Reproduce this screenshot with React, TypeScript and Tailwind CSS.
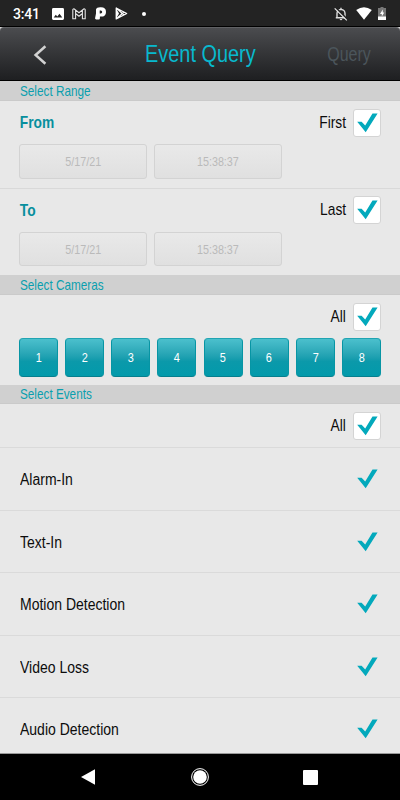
import type { ReactNode } from "react"

const cameras = [1, 2, 3, 4, 5, 6, 7, 8]

const events = [
  { name: "Alarm-In", height: "h-[63px]" },
  { name: "Text-In", height: "h-[62px]" },
  { name: "Motion Detection", height: "h-[63px]" },
  { name: "Video Loss", height: "h-[62px]" },
  { name: "Audio Detection", height: "h-[56px]" },
]

// condensed lettering, squeezed towards the given origin
function Narrow({
  children,
  className = "origin-left",
}: {
  children: ReactNode
  className?: string
}) {
  return (
    <span className={`inline-block scale-x-[0.81] whitespace-nowrap ${className}`}>
      {children}
    </span>
  )
}

function Check() {
  return (
    <svg width="22" height="20" viewBox="0 0 22 20" className="shrink-0">
      <path d="M1.2 8.8H5.6L9.2 12.6L16.5 .6H21.6L9.7 19.2Z" fill="#03a9bc" />
    </svg>
  )
}

function Checkbox({ label }: { label: string }) {
  return (
    <div className="flex items-center gap-[7px]">
      <Narrow className="origin-right text-[17px] leading-5 text-[#0c0c0c]">{label}</Narrow>
      <div className="flex h-7 w-7 items-center justify-center rounded-[3px] border border-[#d4d4d4] bg-white">
        <Check />
      </div>
    </div>
  )
}

function SectionTitle({ children }: { children: string }) {
  return (
    <div className="flex h-full items-center border-b border-[#cacaca] bg-[#d0d0d0] pl-[19.5px] text-[14.5px] leading-4 text-[#0a9fae]">
      <Narrow>{children}</Narrow>
    </div>
  )
}

function DateField({ value }: { value: string }) {
  return (
    <div className="flex h-full w-32 items-center justify-center rounded-[3px] border border-[#d3d3d3] bg-linear-to-b from-[#e9e9e9] to-[#e0e0e0] pt-px text-[13.3px] text-[#bababa]">
      <Narrow className="origin-center">{value}</Narrow>
    </div>
  )
}

function StatusBar() {
  return (
    <div className="flex h-[27px] items-center border-b border-black bg-[#232323] pt-px text-white">
      <span className="w-[38px] shrink-0 ml-[13px] pt-px font-['Roboto',sans-serif] text-[14px] font-medium leading-4 tracking-[-0.2px]">
        3:41
      </span>
      <svg width="12" height="12" viewBox="0 0 12 12" className="ml-px">
        <path
          fill="#fff"
          fillRule="evenodd"
          d="M1.4 0H10.6Q12 0 12 1.4V10.6Q12 12 10.6 12H1.4Q0 12 0 10.6V1.4Q0 0 1.4 0ZM1.7 9.5H10.3L7.5 5.7L5.3 8.4L3.8 6.7Z"
        />
      </svg>
      <svg width="14" height="12" viewBox="0 0 14 12" className="ml-[8px]">
        <path
          d="M.8 10.8V1.8Q.8.8 2 .9L7 4.8L12 .9Q13.2.8 13.2 1.8V10.8H10.4V5.5L7 8.2L3.6 5.5V10.8ZM3.6 2.2V5.5M10.4 2.2V5.5"
          fill="none"
          stroke="#e6e6e6"
          strokeWidth="1.1"
        />
      </svg>
      <svg width="12" height="13" viewBox="0 0 12 13" className="ml-[9px]">
        <path
          fill="#fff"
          fillRule="evenodd"
          d="M1 6.5V2.5Q1.6 .4 5.2 .3H6Q11 .3 11 4.9Q11 9.6 6 9.6H4.9V11.4Q4.6 12.6 3 12.6H1L0 11.6ZM4.7 3.4V6.6H5.7Q7.2 6.4 7.2 5Q7.2 3.4 5.8 3.4Z"
        />
      </svg>
      <svg width="13" height="13" viewBox="0 0 13 13" className="ml-[8px]">
        <path
          d="M1.2 1V12L11.7 6.5ZM1.2 1L9 8M1.2 12L9 5"
          fill="none"
          stroke="#fff"
          strokeWidth="1.2"
          strokeLinejoin="round"
        />
        <path d="M1 1L4 6.5L1 12Z" fill="#fff" />
      </svg>
      <div className="ml-[14px] h-1 w-1 rounded-full bg-white" />
      <svg width="14" height="14" viewBox="0 0 14 14" className="ml-auto">
        <path
          d="M3 10.8V6.5Q3 3 7 2.4Q11 3 11 6.5V10.8M1.8 10.8H12M7 .7V2.4"
          fill="none"
          stroke="#ddd"
          strokeWidth="1.4"
        />
        <path d="M5.6 12H8.4Q8.1 13.3 7 13.3Q5.9 13.3 5.6 12Z" fill="#ddd" />
        <path d="M1.8 .8L13.6 12.6" stroke="#232323" strokeWidth="1.6" />
        <path d="M.7 1.3L12.8 13.4" stroke="#eee" strokeWidth="1.2" />
      </svg>
      <svg width="16" height="13" viewBox="0 0 16 13" className="ml-[8px]">
        <path d="M.2 3.1Q8-2.7 15.8 3.1L8 12.8Z" fill="#fff" />
      </svg>
      <svg width="8" height="13" viewBox="0 0 8 13" className="ml-[6px] mr-[14px]">
        <path d="M2.5 0H5.5V1H8V13H0V1H2.5Z" fill="#777" />
        <path d="M0 9.5H8V13H0Z" fill="#fff" />
        <path d="M4.8 2.5L2 7H3.8V9.5L6.3 5.5H4.8Z" fill="#fff" />
      </svg>
    </div>
  )
}

function Header() {
  return (
    <div className="bg-[#d8d8d8]">
      <div className="grid h-[54px] grid-cols-[1fr_auto_1fr] items-center rounded-t-[4px] border-t border-b border-t-[#606164] border-b-black bg-linear-to-b from-[#4b4c4f] to-[#1e1f21]">
        <svg width="14" height="20" viewBox="0 0 14 20" className="ml-[33px] mt-[2px]">
          <path d="M12.4 1.3L2.6 10L12.4 18.7" fill="none" stroke="#d2d2d2" strokeWidth="2.5" />
        </svg>
        <h1 className="text-[24.6px] leading-7 text-[#08b9ce]">
          <Narrow className="origin-center">Event Query</Narrow>
        </h1>
        <div className="mr-[29px] text-right text-[19.8px] leading-6 text-[#4b555b]">
          <Narrow className="origin-right">Query</Narrow>
        </div>
      </div>
    </div>
  )
}

export default function App() {
  return (
    <div className="flex h-[800px] w-[400px] flex-col overflow-hidden bg-[#e8e8e8] font-['Liberation_Sans',Arial,sans-serif]">
      <StatusBar />
      <Header />
      <div className="h-5">
        <SectionTitle>Select Range</SectionTitle>
      </div>
      <div className="h-[88px] border-b border-[#d9d9d9] px-[19px] pt-2">
        <div className="flex h-7 items-center justify-between">
          <Narrow className="origin-left pl-px text-[17px] font-bold text-[#078f9d]">From</Narrow>
          <Checkbox label="First" />
        </div>
        <div className="mt-[7px] flex h-[35px] gap-[7px]">
          <DateField value="5/17/21" />
          <DateField value="15:38:37" />
        </div>
      </div>
      <div className="h-[86px] px-[19px] pt-[7px]">
        <div className="flex h-7 items-center justify-between">
          <Narrow className="origin-left pl-px pt-px text-[17px] font-bold text-[#078f9d]">To</Narrow>
          <Checkbox label="Last" />
        </div>
        <div className="mt-2 flex h-[34px] gap-[7px]">
          <DateField value="5/17/21" />
          <DateField value="15:38:37" />
        </div>
      </div>
      <div className="h-5">
        <SectionTitle>Select Cameras</SectionTitle>
      </div>
      <div className="h-[90px] px-[19px] pt-2">
        <div className="flex justify-end">
          <Checkbox label="All" />
        </div>
        <div className="mt-[7px] flex h-[39px] justify-between">
          {cameras.map((camera) => (
            <div
              key={camera}
              className="flex w-[39px] items-center justify-center rounded-[4px] border border-t-[#20a4b2] border-r-[#0795a4] border-b-[#057f8e] border-l-[#0795a4] bg-linear-to-b from-[#4bc0cd] via-[#0b99aa] via-60% to-[#029aab] pt-px text-[13.5px] text-white"
            >
              <Narrow className="origin-center">{camera}</Narrow>
            </div>
          ))}
        </div>
      </div>
      <div className="h-[19px]">
        <SectionTitle>Select Events</SectionTitle>
      </div>
      <div className="flex h-[44px] items-center justify-end border-b border-[#dadada] pr-[19px]">
        <Checkbox label="All" />
      </div>
      <div className="flex flex-col">
        {events.map((event) => (
          <div
            key={event.name}
            className={`flex shrink-0 justify-between border-b border-[#dadada] pl-[20px] pr-[22px] pt-[21px] last:border-[#999] ${event.height}`}
          >
            <Narrow className="origin-left text-[17.3px] leading-5 text-[#0c0c0c]">
              {event.name}
            </Narrow>
            <Check />
          </div>
        ))}
      </div>
      <div className="flex grow items-center bg-black">
        <svg width="15" height="16" viewBox="0 0 15 16" className="ml-[81px]">
          <path d="M0 8L14 .3V15.7Z" fill="#fff" />
        </svg>
        <svg width="18" height="18" viewBox="0 0 18 18" className="ml-[95px]">
          <circle cx="9" cy="9" r="8.4" fill="none" stroke="#fff" strokeWidth="1" />
          <circle cx="9" cy="9" r="6.8" fill="#fff" />
        </svg>
        <div className="ml-[94px] h-[15px] w-[15px] rounded-[1px] bg-white" />
      </div>
    </div>
  )
}
